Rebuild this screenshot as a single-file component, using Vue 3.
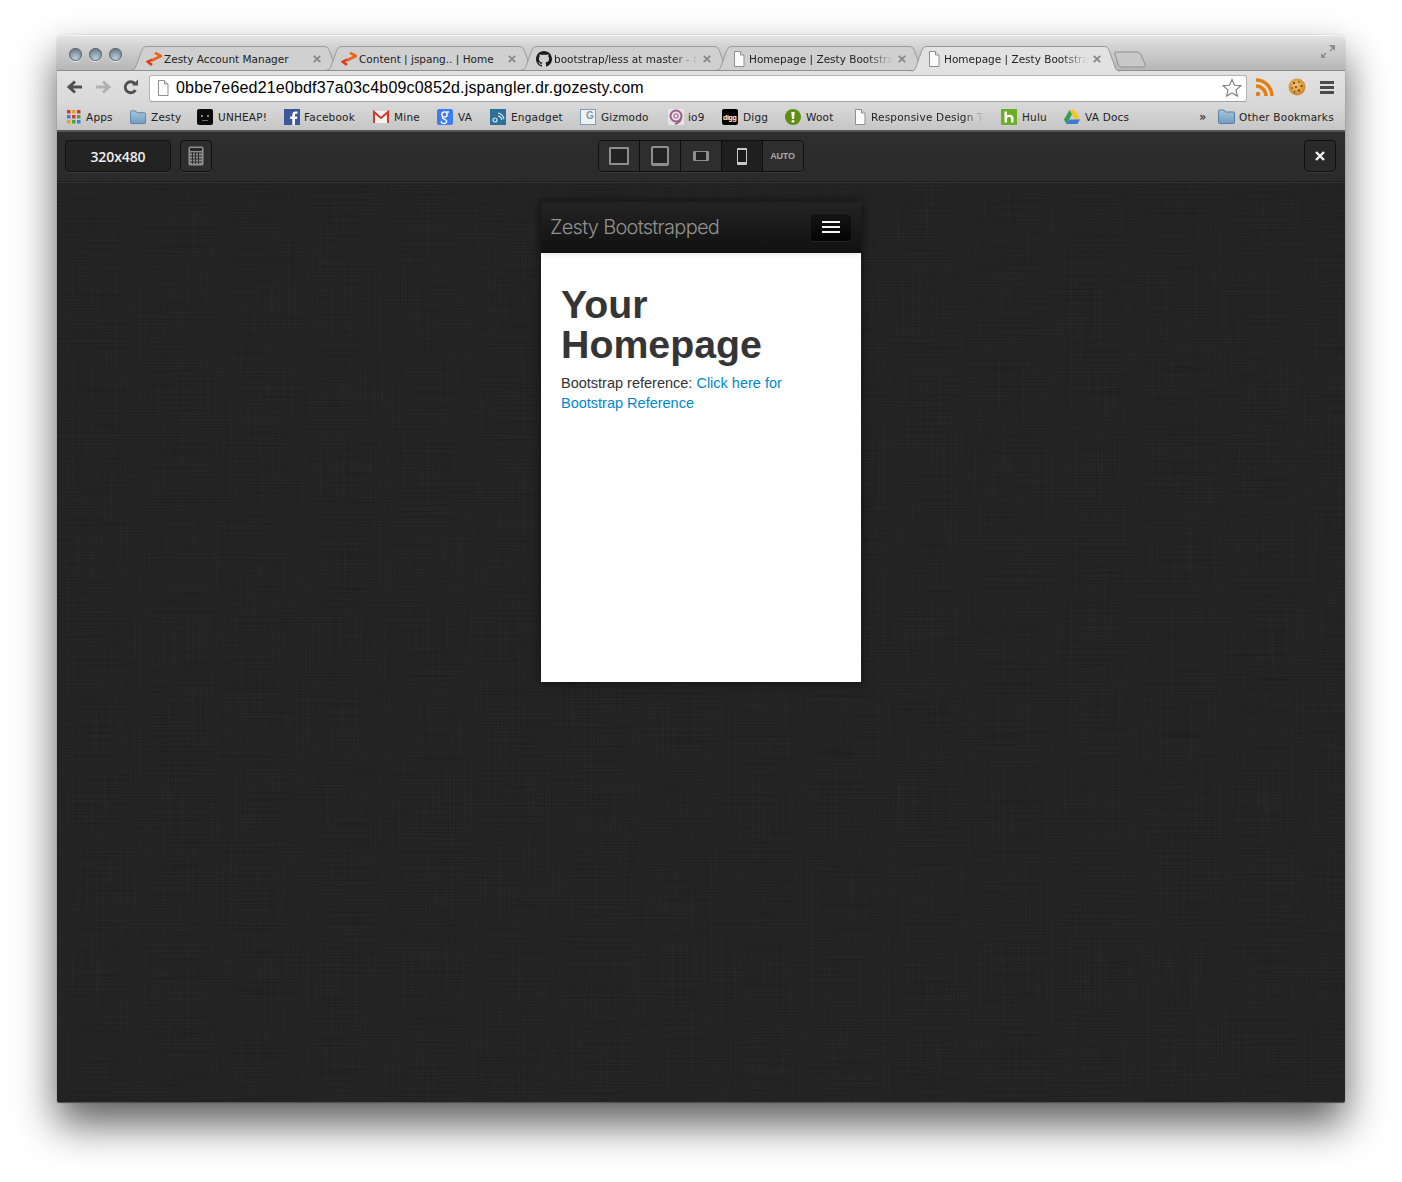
<script setup>
const tabs = [
  { title: 'Zesty Account Manager', icon: 'zesty', fade: false },
  { title: 'Content | jspang.. | Home', icon: 'zesty', fade: false },
  { title: 'bootstrap/less at master - twbs', icon: 'github', fade: true },
  { title: 'Homepage | Zesty Bootstrapped', icon: 'doc', fade: true },
  { title: 'Homepage | Zesty Bootstrapped', icon: 'doc', fade: true, active: true }
]
const bookmarks = [
  { label: 'Apps', icon: 'apps', w: 64, g: 4 },
  { label: 'Zesty', icon: 'folder', w: 67, g: 5 },
  { label: 'UNHEAP!', icon: 'unheap', w: 87, g: 5 },
  { label: 'Facebook', icon: 'fb', w: 89, g: 4 },
  { label: 'Mine', icon: 'gmail', w: 64, g: 5 },
  { label: 'VA', icon: 'google', w: 53, g: 5 },
  { label: 'Engadget', icon: 'engadget', w: 90, g: 5 },
  { label: 'Gizmodo', icon: 'gizmodo', w: 88, g: 5 },
  { label: 'io9', icon: 'io9', w: 54, g: 4 },
  { label: 'Digg', icon: 'digg', w: 63, g: 5 },
  { label: 'Woot', icon: 'woot', w: 67, g: 5 },
  { label: 'Responsive Design Tools', icon: 'doc', w: 149, g: 3, fade: true, tw: 113 },
  { label: 'Hulu', icon: 'hulu', w: 63, g: 5 },
  { label: 'VA Docs', icon: 'drive', w: 100, g: 5 }
]
const devices = ['desktop', 'tablet', 'landscape', 'phone']
</script>

<template>
  <div class="page">
    <svg class="defs" aria-hidden="true">
      <defs>
        <linearGradient id="fold" x1="0" y1="0" x2="0" y2="1">
          <stop offset="0" stop-color="#a9c6de" /><stop offset="1" stop-color="#6f9bc0" />
        </linearGradient>
        <radialGradient id="cookie" cx=".45" cy=".4" r=".65">
          <stop offset="0" stop-color="#f4c16a" /><stop offset="1" stop-color="#c9812c" />
        </radialGradient>
        <filter id="streak-v" x="0" y="0" width="100%" height="100%">
          <feTurbulence type="fractalNoise" baseFrequency="0.7 0.012" numOctaves="2" seed="4" />
          <feColorMatrix values="0 0 0 0 1  0 0 0 0 1  0 0 0 0 1  .55 0 0 0 -.25" />
        </filter>
        <filter id="streak-h" x="0" y="0" width="100%" height="100%">
          <feTurbulence type="fractalNoise" baseFrequency="0.012 0.7" numOctaves="2" seed="9" />
          <feColorMatrix values="0 0 0 0 0  0 0 0 0 0  0 0 0 0 0  .9 0 0 0 -.38" />
        </filter>
        <symbol id="i-zesty" viewBox="0 0 16 14">
          <path d="M9 .8 15 4 5.700 8.500" fill="none" stroke="#ee651a" stroke-width="2.600" />
          <path d="M6 7.600 1.800 9.700 6 13" fill="none" stroke="#e03c18" stroke-width="2.600" />
        </symbol>
        <symbol id="i-github" viewBox="0 0 16 16">
          <path fill="#1b1b1b" d="M8 0C3.600 0 0 3.600 0 8c0 3.500 2.300 6.500 5.500 7.600.4.100.5-.2.500-.4v-1.400c-2.200.5-2.700-1-2.700-1-.4-.9-.9-1.200-.9-1.200-.7-.5.100-.5.100-.5.800.1 1.200.8 1.200.8.700 1.200 1.900.9 2.300.7.100-.5.300-.9.500-1.100-1.800-.2-3.600-.9-3.600-4 0-.9.300-1.600.8-2.100-.1-.2-.4-1 .1-2.100 0 0 .7-.2 2.200.8.600-.2 1.300-.3 2-.3s1.400.1 2 .3c1.500-1 2.200-.8 2.200-.8.500 1.100.2 1.900.1 2.100.5.600.8 1.300.8 2.100 0 3.100-1.900 3.700-3.700 3.900.3.300.6.800.6 1.500v2.200c0 .2.100.5.600.4C13.700 14.500 16 11.500 16 8c0-4.400-3.600-8-8-8z" />
        </symbol>
        <symbol id="i-doc" viewBox="0 0 16 16">
          <path d="M3.500 .5h6l3.500 3.500v11.500H3.500z" fill="#fbfbfb" stroke="#8f8f8f" />
          <path d="M9.500 .5V4H13" fill="#e4e4e4" stroke="#8f8f8f" />
        </symbol>
        <symbol id="i-apps" viewBox="0 0 16 16">
          <rect x="1" y="1" width="3.500" height="3.500" fill="#d9382c" /><rect x="6" y="1" width="3.500" height="3.500" fill="#e8a020" /><rect x="11" y="1" width="3.500" height="3.500" fill="#d9382c" />
          <rect x="1" y="6" width="3.500" height="3.500" fill="#3a7fd8" /><rect x="6" y="6" width="3.500" height="3.500" fill="#d9382c" /><rect x="11" y="6" width="3.500" height="3.500" fill="#4aa54a" />
          <rect x="1" y="11" width="3.500" height="3.500" fill="#e8a020" /><rect x="6" y="11" width="3.500" height="3.500" fill="#4aa54a" /><rect x="11" y="11" width="3.500" height="3.500" fill="#3a7fd8" />
        </symbol>
        <symbol id="i-folder" viewBox="0 0 17 15">
          <path d="M.5 13.500V2A1 1 0 0 1 1.500 1h4.500l1.500 2h8a1 1 0 0 1 1 1v9.500a1 1 0 0 1-1 1h-14a1 1 0 0 1-1-1z" fill="url(#fold)" stroke="#5a7f9f" />
        </symbol>
        <symbol id="i-unheap" viewBox="0 0 16 16">
          <rect width="16" height="16" rx="2" fill="#0b0b0b" />
          <rect x="4" y="6" width="2" height="2" fill="#8a8a8a" /><rect x="10" y="6" width="2" height="2" fill="#8a8a8a" /><rect x="5" y="11" width="6" height="1" fill="#6a6a6a" />
        </symbol>
        <symbol id="i-fb" viewBox="0 0 16 16">
          <rect width="16" height="16" fill="#3b5998" />
          <path fill="#fff" d="M11 16v-6h2l.4-2.500H11V6c0-.8.300-1.200 1.200-1.200h1.300V2.500c-.5-.1-1.200-.1-1.900-.1-2 0-3.300 1.200-3.300 3.300v1.800H6.200V10h2.100v6z" />
        </symbol>
        <symbol id="i-gmail" viewBox="0 0 16 16">
          <rect y="2" width="16" height="12" fill="#f4f4f4" />
          <path d="M1 14V3l7 6 7-6v11" fill="none" stroke="#d9362b" stroke-width="2" />
        </symbol>
        <symbol id="i-google" viewBox="0 0 16 16">
          <rect width="16" height="16" rx="2" fill="#3f7cf0" />
          <circle cx="7.500" cy="5.500" r="2.600" fill="none" stroke="#fff" stroke-width="1.400" />
          <path d="M9.500 3h2.500M6 8c-1.500 1 0 1.500 2 2.500 3 1.500 1.500 4-1 4-2 0-3.500-1-2.500-2.500" fill="none" stroke="#fff" stroke-width="1.300" />
        </symbol>
        <symbol id="i-engadget" viewBox="0 0 16 16">
          <rect width="16" height="16" fill="#2d6f96" />
          <circle cx="5" cy="11" r="2" fill="none" stroke="#d6e8f2" stroke-width="1.200" />
          <path d="M8 7a5 5 0 0 1 4 4M8 4a8 8 0 0 1 6 6" fill="none" stroke="#d6e8f2" stroke-width="1.200" />
        </symbol>
        <symbol id="i-gizmodo" viewBox="0 0 16 16">
          <rect x=".5" y=".5" width="15" height="15" fill="#eef2f5" stroke="#7d9db8" />
          <text x="10" y="9.500" font-size="10" font-weight="700" text-anchor="middle" fill="#7f97ab" font-family="Liberation Sans, sans-serif">G</text>
        </symbol>
        <symbol id="i-io9" viewBox="0 0 16 16">
          <rect width="16" height="16" fill="#e9e2e6" />
          <circle cx="8" cy="7" r="5.500" fill="none" stroke="#9a5f86" stroke-width="2" />
          <circle cx="8" cy="7" r="2" fill="none" stroke="#b486a6" stroke-width="1.500" />
          <path d="M13 8c0 4-2 6-6 7" fill="none" stroke="#9a5f86" stroke-width="2" />
        </symbol>
        <symbol id="i-digg" viewBox="0 0 16 16">
          <rect width="16" height="16" rx="2" fill="#000" />
          <text x="8" y="10.500" font-size="7" font-weight="700" text-anchor="middle" fill="#fff" font-family="Liberation Sans, sans-serif" textLength="14">digg</text>
        </symbol>
        <symbol id="i-woot" viewBox="0 0 16 16">
          <circle cx="8" cy="8" r="8" fill="#5f8f10" />
          <path d="M6.300 3h3.400L9 10H7z" fill="#fff" /><circle cx="8" cy="12.300" r="1.400" fill="#fff" />
        </symbol>
        <symbol id="i-hulu" viewBox="0 0 16 16">
          <rect width="16" height="16" fill="#6cae24" />
          <path d="M3.500 2.500h2.500v4c1-.8 5.500-1.500 6.500 2v5H10V9.500c0-2-4-2-4 0v4H3.500z" fill="#fff" />
        </symbol>
        <symbol id="i-drive" viewBox="0 0 16 16">
          <path d="M5.500 1h5L16 10.500h-5z" fill="#f5c518" />
          <path d="M5.500 1 0 10.500l2.500 4.500L8 5.500z" fill="#2f9e4f" />
          <path d="M2.500 15 5.200 10.500H16L13.500 15z" fill="#3a78dc" />
        </symbol>
        <symbol id="i-cookie" viewBox="0 0 18 18">
          <circle cx="9" cy="9" r="8.500" fill="url(#cookie)" />
          <g fill="#5a3110"><circle cx="6" cy="5" r="1" /><circle cx="11" cy="4" r=".8" /><circle cx="13.500" cy="8" r="1" /><circle cx="8" cy="9" r=".9" /><circle cx="4" cy="10" r=".8" /><circle cx="11" cy="12.500" r="1" /><circle cx="6.500" cy="14" r=".8" /></g>
        </symbol>
      </defs>
    </svg>

    <div class="window">
      <header class="tabstrip">
        <div class="lights"><i class="light" /><i class="light" /><i class="light" /></div>
        <div class="tabs">
          <div v-for="t in tabs" :key="t.title + t.icon + t.active" class="tab" :class="{ active: t.active }">
            <svg class="tabshape" viewBox="0 0 209 25" preserveAspectRatio="none">
              <path d="M0 25C3 25 4 24 5 21L11 4C12 1 14 .5 17 .5H192C195 .5 197 1 198 4L204 21C205 24 206 25 209 25" />
            </svg>
            <svg class="ico tabico" :class="'ic-' + t.icon"><use :href="'#i-' + t.icon" /></svg>
            <span class="tabtitle" :class="{ fade: t.fade }">{{ t.title }}</span>
            <svg class="tabx" viewBox="0 0 8 8"><path d="M.8 .8l6.400 6.400M7.200 .8 .8 7.200" stroke="#858585" stroke-width="1.700" /></svg>
          </div>
          <svg class="newtab" viewBox="0 0 32 17"><path d="M1 1h22c2 0 3 1 4 3l4 9c.6 2-.5 3-2 3H8c-2 0-3-1-4-3L1 3C.5 2 .500 1 1 1z" /></svg>
        </div>
        <svg class="expand" viewBox="0 0 16 16">
          <path d="M9 1h6v6l-2-2-2.500 2.500-1-1L12 4zM1 9l2 2 2.500-2.500 1 1L4 12l2 2H1z" fill="#8e8e8e" />
        </svg>
      </header>

      <div class="toolbar">
        <svg class="nav" viewBox="0 0 18 16"><path d="M16 8H4M9 2.500 3 8l6 5.500" fill="none" stroke="#505050" stroke-width="3" /></svg>
        <svg class="nav" viewBox="0 0 18 16"><path d="M2 8h12M9 2.500 15 8l-6 5.500" fill="none" stroke="#b0b0b0" stroke-width="3" /></svg>
        <svg class="nav" viewBox="0 0 18 16"><path d="M13.500 11A5.500 5.500 0 1 1 13 4.800" fill="none" stroke="#505050" stroke-width="2.800" /><path d="M10 6.500h6v-6z" fill="#505050" /></svg>
        <div class="omnibox">
          <svg class="ico"><use href="#i-doc" /></svg>
          <span class="url">0bbe7e6ed21e0bdf37a03c4b09c0852d.jspangler.dr.gozesty.com</span>
          <svg class="star" viewBox="0 0 20 20"><path d="M10 1.500l2.500 5.700 6.200.6-4.700 4.100 1.400 6.100-5.400-3.200-5.400 3.200 1.400-6.100L1.300 7.800l6.200-.6z" fill="#fff" stroke="#777" stroke-width="1.100" /></svg>
        </div>
        <svg class="rss" viewBox="0 0 20 20">
          <circle cx="3" cy="17" r="2.200" fill="#e07a10" />
          <path d="M1 9a10 10 0 0 1 10 10M1 3a16 16 0 0 1 16 16" fill="none" stroke="#e47f14" stroke-width="3.400" />
        </svg>
        <svg class="cookie"><use href="#i-cookie" /></svg>
        <div class="menu"><i /><i /><i /></div>
      </div>

      <nav class="bookmarks">
        <div v-for="b in bookmarks" :key="b.label" class="bm" :style="{ width: b.w + 'px', gap: b.g + 'px' }">
          <svg class="ico"><use :href="'#i-' + b.icon" /></svg>
          <span class="bmlabel" :class="{ fade: b.fade }" :style="b.tw ? { width: b.tw + 'px' } : null">{{ b.label }}</span>
        </div>
        <span class="more">»</span>
        <div class="bm other">
          <svg class="ico"><use href="#i-folder" /></svg>
          <span class="bmlabel">Other Bookmarks</span>
        </div>
      </nav>

      <div class="tester">
        <div class="sizegroup">
          <button class="size">320x480</button>
          <button class="calc">
            <svg viewBox="0 0 16 20" width="16" height="20">
              <rect x=".5" y=".5" width="15" height="19" rx="1.500" fill="#8f8f8f" />
              <rect x="2" y="2" width="12" height="3" fill="#2a2a2a" />
              <path d="M2 7h12M2 10h12M2 13h12M2 16h12M4.500 6.500V18M7.500 6.500V18M10.500 6.500V18" stroke="#2e2e2e" stroke-width="1" />
            </svg>
          </button>
        </div>
        <div class="devices">
          <button v-for="d in devices" :key="d" class="device" :class="{ on: d === 'phone' }">
            <span class="shape" :class="d" />
          </button>
          <button class="device auto">AUTO</button>
        </div>
        <button class="closebtn">
          <svg viewBox="0 0 10 10" width="10" height="10"><path d="M1 1l8 8M9 1 1 9" stroke="#f2f2f2" stroke-width="2.400" /></svg>
        </button>
      </div>

      <main class="canvas">
        <svg class="weave" aria-hidden="true" width="100%" height="100%">
          <rect width="100%" height="100%" filter="url(#streak-v)" opacity=".09" />
          <rect width="100%" height="100%" filter="url(#streak-h)" opacity=".3" />
        </svg>
        <div class="frame">
          <div class="navbar">
            <span class="brand">Zesty Bootstrapped</span>
            <button class="toggle"><i /><i /><i /></button>
          </div>
          <div class="content">
            <h1>Your Homepage</h1>
            <p>Bootstrap reference: <a>Click here for Bootstrap Reference</a></p>
          </div>
        </div>
      </main>
    </div>
  </div>
</template>

<style>
html, body { margin: 0; background: #fff; }
</style>

<style scoped>
.page {
  box-sizing: border-box;
  width: 1402px;
  height: 1182px;
  padding: 35px 57px 79px;
  overflow: hidden;
  background: #fff;
}
.defs { position: absolute; width: 0; height: 0; }
.window {
  height: 1068px;
  display: flex;
  flex-direction: column;
  border-radius: 5px 5px 2px 2px;
  box-shadow: 0 21px 42px rgba(0, 0, 0, .64), 0 0 1px rgba(0, 0, 0, .5);
  font-family: "DejaVu Sans", sans-serif;
}
.tabstrip {
  position: relative;
  height: 36px;
  flex: none;
  display: flex;
  background: linear-gradient(#e6e6e6, #d4d4d4 30%, #b6b6b6);
  border-bottom: 1px solid #8f8f8f;
  border-radius: 5px 5px 0 0;
  box-sizing: border-box;
  box-shadow: inset 0 1px 0 #f5f5f5;
}
.lights { display: flex; gap: 7px; padding: 13px 0 0 12px; width: 65px; box-sizing: border-box; flex: none; }
.light {
  width: 13px;
  height: 13px;
  border-radius: 50%;
  background: radial-gradient(circle at 50% 80%, #bccfdf, #6d7c8a 75%);
  box-shadow: 0 1px 0 #eee, inset 0 0 0 1px #666c72;
}
.tabs { display: flex; margin-left: 12px; padding-top: 11px; position: relative; }
.tab {
  position: relative;
  width: 195px;
  height: 25px;
  flex: none;
  display: flex;
  align-items: center;
  font-size: 10.500px;
  color: #222;
}
.tabshape { position: absolute; left: -3px; top: 0; width: 209px; height: 24px; overflow: visible; }
.tabshape path { fill: #d0d0d0; stroke: #9a9a9a; }
.tab.active { z-index: 2; }
.tab.active .tabshape { height: 25px; }
.tab.active .tabshape path { fill: #e2e2e2; }
.tab .ico, .tab .tabtitle { position: relative; }
.ico { width: 16px; height: 16px; flex: none; }
.tabico { margin: 0 0 0 12px; }
.ic-zesty { height: 14px; }
.tabtitle {
  width: 144px;
  margin-left: 2px;
  white-space: nowrap;
  overflow: hidden;
  flex: none;
}
.fade {
  -webkit-mask-image: linear-gradient(90deg, #000 82%, transparent);
  mask-image: linear-gradient(90deg, #000 82%, transparent);
}
.tabx { position: absolute; right: 8px; top: 9px; width: 8px; height: 8px; }
.newtab { width: 32px; height: 17px; margin: 5px 0 0 5px; flex: none; position: relative; z-index: 1; }
.newtab path { fill: #c8c8c8; stroke: #909090; }
.expand { position: absolute; right: 9px; top: 9px; width: 16px; height: 16px; }

.toolbar {
  position: relative;
  z-index: 1;
  height: 32px;
  flex: none;
  box-sizing: border-box;
  display: flex;
  align-items: center;
  padding: 0 0 0 9px;
  background: linear-gradient(#e2e2e2, #d9d9d9);
}
.nav { width: 18px; height: 16px; flex: none; margin-right: 10px; }
.omnibox {
  width: 1098px;
  height: 27px;
  flex: none;
  box-sizing: border-box;
  margin: 2px 0 0 -1px;
  display: flex;
  align-items: center;
  background: #fff;
  border: 1px solid #b4b4b4;
  border-bottom-color: #a0a0a0;
  border-radius: 3px;
  padding-left: 5px;
}
.url {
  font-family: "Liberation Sans", Arial, sans-serif;
  font-size: 16px;
  letter-spacing: .175px;
  color: #000;
  margin-left: 5px;
  white-space: nowrap;
  flex: 1;
}
.star { width: 20px; height: 20px; margin-right: 4px; flex: none; }
.rss { width: 20px; height: 20px; margin-left: 8px; flex: none; }
.cookie { width: 18px; height: 18px; margin-left: 13px; flex: none; }
.menu { display: flex; flex-direction: column; gap: 2px; margin-left: 14px; }
.menu i { display: block; width: 14px; height: 3px; background: #4a4a4a; }

.bookmarks {
  position: relative;
  z-index: 1;
  height: 29px;
  flex: none;
  box-sizing: border-box;
  display: flex;
  align-items: center;
  padding: 0 0 0 9px;
  background: linear-gradient(#d9d9d9, #c6c6c6);
  border-bottom: 2px solid #555;
  font-size: 10.500px;
  color: #222;
  letter-spacing: .2px;
}
.bm { display: flex; align-items: center; flex: none; white-space: nowrap; }
.bmlabel { overflow: hidden; }
.more { margin-left: 35px; width: 19px; font-size: 12px; }
.other { gap: 4px; }
.other .ico { width: 17px; height: 15px; }

.tester {
  height: 50px;
  flex: none;
  box-sizing: border-box;
  position: relative;
  display: grid;
  grid-template-columns: 1fr auto 1fr;
  align-items: center;
  padding: 0 9px 1px 8px;
  background: linear-gradient(#2e2e2e, #2a2a2a);
  border-bottom: 1px solid #1e1e1e;
  box-shadow: 0 1px 0 #333;
  z-index: 1;
}
button { font-family: inherit; padding: 0; cursor: default; }
.sizegroup { display: flex; gap: 9px; }
.size, .calc, .closebtn {
  height: 32px;
  border: 1px solid #111;
  border-radius: 4px;
  background: #252525;
  box-shadow: 0 1px 0 #3a3a3a;
}
.size {
  width: 106px;
  color: #eee;
  font-size: 14px;
  font-family: "Open Sans", sans-serif;
  font-weight: 600;
  background: #232323;
  letter-spacing: -.1px;
}
.calc { width: 32px; display: flex; align-items: center; justify-content: center; background: #2e2e2e; }
.closebtn { width: 32px; display: flex; align-items: center; justify-content: center; background: #2a2a2a; justify-self: end; }
.devices {
  display: flex;
  height: 32px;
  box-sizing: border-box;
  border: 1px solid #0f0f0f;
  border-radius: 4px;
  box-shadow: 0 1px 0 #3a3a3a;
  overflow: hidden;
}
.device {
  width: 41px;
  height: 30px;
  border: 0;
  border-right: 1px solid #0f0f0f;
  background: #2e2e2e;
  display: flex;
  align-items: center;
  justify-content: center;
  color: #aaa;
}
.device.on { background: #1f1f1f; }
.device.auto { border-right: 0; width: 40px; font-family: "Liberation Sans", sans-serif; font-size: 9px; font-weight: 700; letter-spacing: -.2px; }
.shape { display: block; box-sizing: border-box; border: 2px solid #8e8e8e; border-radius: 1px; background: #222; }
.shape.desktop { width: 20px; height: 18px; }
.shape.tablet { width: 18px; height: 20px; border-radius: 2px; border-bottom-width: 3px; }
.shape.landscape { width: 16px; height: 10px; border-width: 1px 3px; border-color: #8e8e8e; }
.shape.phone { width: 10px; height: 17px; border-width: 2px 1.500px 3px; border-color: #c8c8c8; background: #1a1a1a; }

.canvas {
  position: relative;
  flex: 1;
  display: flex;
  justify-content: center;
  align-items: flex-start;
  padding-top: 20px;
  background-color: #242424;
  box-shadow: inset 0 -1px 0 #555;
  border-radius: 0 0 2px 2px;
  overflow: hidden;
  background-image:
    repeating-linear-gradient(90deg, rgba(255, 255, 255, .012) 0 1px, transparent 1px 3px),
    repeating-linear-gradient(0deg, rgba(0, 0, 0, .05) 0 1px, transparent 1px 3px);
}
.weave { position: absolute; left: 0; top: 0; pointer-events: none; }
.frame {
  position: relative;
  width: 320px;
  height: 480px;
  flex: none;
  background: #fff;
  box-shadow: 0 0 10px rgba(0, 0, 0, .55);
  font-family: "Liberation Sans", Arial, sans-serif;
  color: #333;
}
.navbar {
  height: 51px;
  box-sizing: border-box;
  display: flex;
  align-items: center;
  justify-content: space-between;
  padding: 0 10px 1px 9px;
  background: linear-gradient(#232323, #111);
  box-shadow: 0 1px 6px rgba(0, 0, 0, .12);
}
.brand { font-family: Inter, sans-serif; font-size: 20px; font-weight: 300; color: #929292; letter-spacing: -.72px; }
.toggle {
  width: 40px;
  height: 28px;
  border: 0;
  border-radius: 4px;
  display: flex;
  flex-direction: column;
  align-items: center;
  justify-content: center;
  gap: 3px;
  background: linear-gradient(#151515, #030303);
  box-shadow: inset 0 1px 0 rgba(255, 255, 255, .07), 0 1px 0 rgba(255, 255, 255, .07);
}
.toggle i { display: block; width: 18px; height: 2px; background: #f5f5f5; }
.content { padding: 31px 20px 0; }
h1 { margin: 0 0 9px; font-size: 39.300px; line-height: 40px; font-weight: 700; color: #353535; }
p { margin: 0; font-size: 14.500px; line-height: 20px; }
a { color: #0088cc; }
</style>
